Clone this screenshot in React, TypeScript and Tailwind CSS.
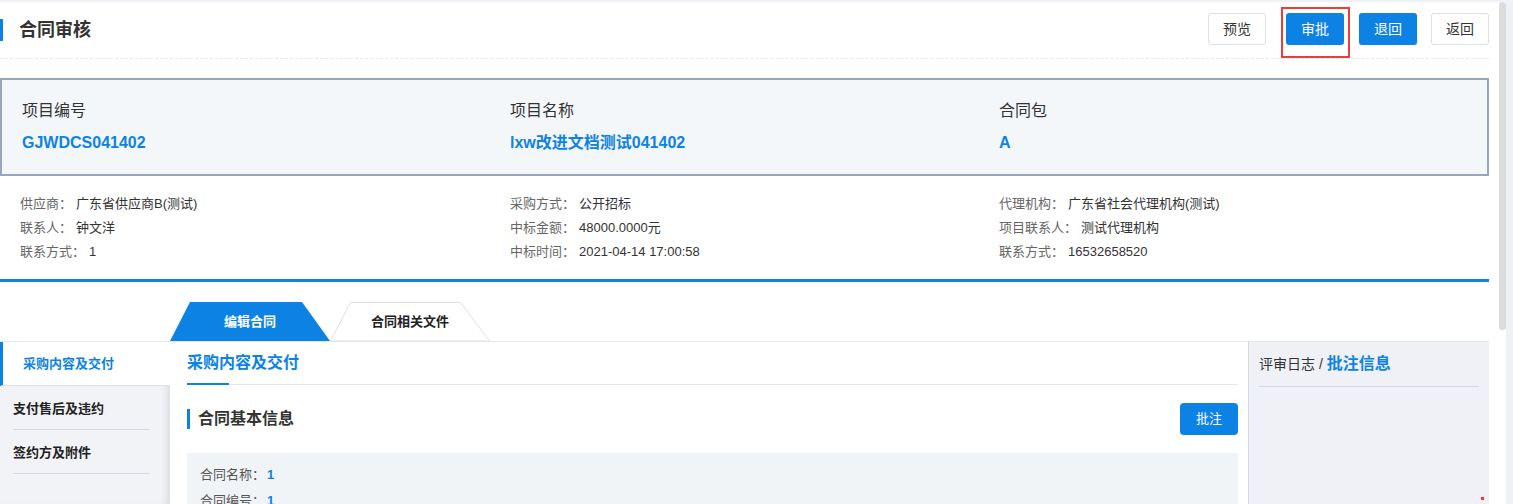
import React from 'react';

const font = { fontFamily: '"Liberation Sans", "Noto Sans CJK SC", sans-serif' };

const details = [
  [
    ['供应商', '广东省供应商B(测试)'],
    ['联系人', '钟文洋'],
    ['联系方式', '1'],
  ],
  [
    ['采购方式', '公开招标'],
    ['中标金额', '48000.0000元'],
    ['中标时间', '2021-04-14 17:00:58'],
  ],
  [
    ['代理机构', '广东省社会代理机构(测试)'],
    ['项目联系人', '测试代理机构'],
    ['联系方式', '16532658520'],
  ],
];

const summary = [
  ['项目编号', 'GJWDCS041402'],
  ['项目名称', 'lxw改进文档测试041402'],
  ['合同包', 'A'],
];

function Header() {
  return (
    <div className="flex h-[57px] items-center justify-between border-b border-dashed border-[#e6e8eb]">
      <div className="flex items-center">
        <div className="h-[22px] w-[3px] bg-[#0c83e4]" />
        <h1 className="ml-4 text-[18px] font-bold leading-6 text-[#333]">合同审核</h1>
      </div>
      <div className="mb-[2px] flex items-center">
        <button className="h-8 w-[58px] rounded-[3px] border border-[#dcdfe6] bg-white text-[14px] text-[#333]">预览</button>
        <div className="relative ml-5">
          <button className="h-8 w-[58px] rounded-[3px] bg-[#0c83e4] text-[14px] text-white">审批</button>
          <div className="pointer-events-none absolute -left-[5px] -right-[6px] -top-[6px] -bottom-[13px] border-2 border-[#ee3b3b]" />
        </div>
        <button className="ml-[15px] h-8 w-[58px] rounded-[3px] bg-[#0c83e4] text-[14px] text-white">退回</button>
        <button className="ml-[14px] h-8 w-[58px] rounded-[3px] border border-[#dcdfe6] bg-white text-[14px] text-[#333]">返回</button>
      </div>
    </div>
  );
}

function Tab({ label, active }: { label: string; active?: boolean }) {
  return (
    <div className="relative flex h-[39px] w-[160px] items-center justify-center">
      <svg className="absolute inset-0" width="160" height="39" viewBox="0 0 160 39">
        {active ? (
          <polygon points="20,0 132,0 160,39 0,39" fill="#0c83e4" />
        ) : (
          <polygon points="20.5,0.5 130.5,0.5 159.5,39 0.5,39" fill="#fff" stroke="#dedfe2" />
        )}
      </svg>
      <span className={`relative text-[13px] font-bold leading-5 ${active ? 'text-white' : 'text-[#222]'}`}>{label}</span>
    </div>
  );
}

export default function App() {
  return (
    <div className="relative h-[504px] w-[1513px] overflow-hidden bg-[#eef1f5] pt-[2px]" style={font}>
      <div className="h-[502px] w-[1506px] bg-white">
        <div className="w-[1489px]">
          <Header />

          <div className="mt-[19px] border-2 border-[#97a7bb] bg-[#f4f7fa] px-5 pb-[19px] pt-[19px]">
            <div className="grid grid-cols-[488px_489px_1fr]">
              {summary.map(([k, v]) => (
                <div key={k}>
                  <div className="text-[16px] leading-6 text-[#333]">{k}</div>
                  <div className="mt-2 text-[16px] font-bold leading-6 text-[#0c83e4]">{v}</div>
                </div>
              ))}
            </div>
          </div>

          <div className="grid grid-cols-[490px_489px_1fr] border-b-[3px] border-[#0c83e4] pb-[15px] pl-5 pt-4">
            {details.map((col, i) => (
              <div key={i}>
                {col.map(([k, v]) => (
                  <div key={k} className="text-[13px] leading-6">
                    <span className="text-[#666]">{k}：</span>
                    <span className="ml-1 text-[#333]">{v}</span>
                  </div>
                ))}
              </div>
            ))}
          </div>

          <div className="flex pl-[170px] pt-5">
            <Tab label="编辑合同" active />
            <Tab label="合同相关文件" />
          </div>

          <div className="flex h-[163px] border-t border-[#e3e6eb]">
            <div className="w-[170px] bg-[#f1f3f6] shadow-[inset_-8px_0_8px_-6px_rgba(0,0,40,0.12)]">
              <div className="flex h-[44px] items-center border-b border-l-[3px] border-b-[#dde1e7] border-l-[#0c83e4] bg-white pl-5 text-[13px] font-bold text-[#0c83e4]">
                采购内容及交付
              </div>
              {['支付售后及违约', '签约方及附件'].map((t) => (
                <div key={t} className="mx-[13px] flex h-[44px] w-[137px] items-center border-b border-[#d5dae2] pt-[2px] text-[13px] font-bold text-[#222]">
                  {t}
                </div>
              ))}
            </div>

            <div className="flex-1 pl-[17px] pr-[10px]">
              <div className="flex h-[43px] items-end border-b border-[#e4e7ed]">
                <div className="-mb-px border-b-2 border-[#0c83e4] pb-[10px]">
                  <span className="block w-[42px] whitespace-nowrap text-[16px] font-bold leading-5 text-[#0c83e4]">采购内容及交付</span>
                </div>
              </div>
              <div className="flex items-center justify-between py-[18px]">
                <div className="flex items-center">
                  <div className="h-[20px] w-[3px] bg-[#0c83e4]" />
                  <span className="ml-2 text-[16px] font-bold leading-6 text-[#333]">合同基本信息</span>
                </div>
                <button className="h-8 w-[58px] rounded-[4px] bg-[#0c83e4] text-[13px] text-white">批注</button>
              </div>
              <div className="bg-[#f1f4f7] px-[13px] pt-3">
                <div className="text-[13px] leading-5">
                  <span className="text-[#555]">合同名称：</span>
                  <span className="ml-[2px] font-bold text-[#0c83e4]">1</span>
                </div>
                <div className="mt-[6px] text-[13px] leading-5">
                  <span className="text-[#555]">合同编号：</span>
                  <span className="ml-[2px] font-bold text-[#0c83e4]">1</span>
                </div>
              </div>
            </div>

            <div className="relative w-[241px] border-l border-[#d5dbe4] bg-[#eff1f6] px-[10px]">
              <div className="flex h-[45px] items-center border-b border-[#d3d9e2]">
                <span className="text-[14px] text-[#333]">评审日志 / </span>
                <span className="ml-1 text-[16px] font-bold text-[#0c83e4]">批注信息</span>
              </div>
              <div className="absolute bottom-[4px] right-[5px] h-[3px] w-[3px] bg-[#f33]" />
            </div>
          </div>
        </div>
      </div>
      <div className="absolute left-[1499px] top-[2px] h-[328px] w-[7px] rounded-[3px] bg-[#dcdcdc]" />
    </div>
  );
}
